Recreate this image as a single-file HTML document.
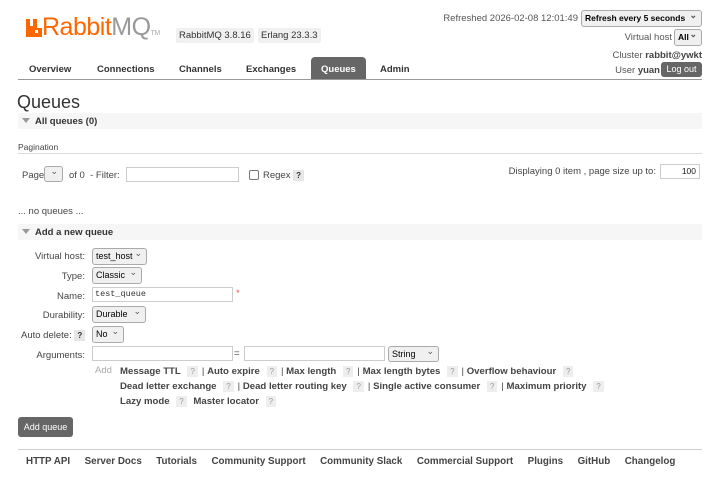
<!DOCTYPE html>
<html><head><meta charset="utf-8"><style>
*{margin:0;padding:0;box-sizing:border-box}
body{width:720px;height:488px;background:#fff;font-family:"Liberation Sans",Arial,sans-serif;font-size:9.5px;color:#444;position:relative;overflow:hidden}
.a{position:absolute;white-space:nowrap}
b{color:#444}
.sel{position:absolute;border:1px solid #aaa;border-radius:3px;background:#f0f0f0;color:#000;font-size:9px;padding:2px 3px;height:17px;overflow:hidden}
.sel:after{content:"⌄";position:absolute;right:4px;top:-1px;font-size:9px;color:#555}
.inp{position:absolute;border:1px solid #ccc;background:#fff;height:15px}
.q{display:inline-block;background:#eee;color:#999;padding:1px 3px;font-size:8px;margin:0 4px}
.qd{display:inline-block;background:#e6e6e6;color:#333;padding:1px 3px;font-size:8px;font-weight:bold}
.bar{position:absolute;left:18px;width:684px;height:16px;background:#f6f6f6}
.bar span{position:absolute;left:17px;top:3px;font-weight:bold;font-size:9.5px;color:#333}
.bar i{position:absolute;left:4px;top:5px;border:4px solid transparent;border-top:5px solid #999;border-bottom:0}
.lbl{position:absolute;right:635px;text-align:right;color:#444}
.nav{position:absolute;top:64px;font-weight:bold;font-size:9.5px;color:#333}
.links{font-size:9.6px}
.links b{font-weight:bold}
.ft span{margin-left:14.5px}
</style></head><body>
<svg class="a" style="left:26px;top:19px" width="16" height="18" viewBox="0 0 16 18"><path d="M0 0h4v7h3V0h4v9h5v9H0z" fill="#f60"/><rect x="9" y="11" width="3" height="3" fill="#fff"/></svg>
<div class="a" style="left:42px;top:13px;font-size:25px;color:#f60;letter-spacing:-0.5px">Rabbit<span style="color:#999">MQ</span><span style="font-size:7px;color:#aaa">TM</span></div>
<div class="a" style="left:176px;top:28px;background:#f0f0f0;padding:2px 3px;font-size:9.5px;color:#333;border-radius:2px">RabbitMQ 3.8.16</div>
<div class="a" style="left:258px;top:28px;background:#f0f0f0;padding:2px 3px;font-size:9.5px;color:#333;border-radius:2px">Erlang 23.3.3</div>
<div class="nav" style="left:29px">Overview</div>
<div class="nav" style="left:97px">Connections</div>
<div class="nav" style="left:179px">Channels</div>
<div class="nav" style="left:246px">Exchanges</div>
<div class="a" style="left:311px;top:57px;width:55px;height:22px;background:#666;border-radius:4px 4px 0 0"></div>
<div class="nav" style="left:321px;color:#fff">Queues</div>
<div class="nav" style="left:380px">Admin</div>
<div class="a" style="left:18px;top:79px;width:684px;height:1px;background:#999"></div>
<div class="a" style="right:142px;top:13px;color:#555">Refreshed 2026-02-08 12:01:49</div>
<div class="sel" style="left:581px;top:10px;width:121px;font-weight:bold;font-size:8.5px">Refresh every 5 seconds</div>
<div class="a" style="right:48px;top:32px;color:#555">Virtual host</div>
<div class="sel" style="left:674px;top:29px;width:28px;font-weight:bold;font-size:8.5px">All</div>
<div class="a" style="right:18px;top:50px;color:#555">Cluster <b>rabbit@ywkt</b></div>
<div class="a" style="right:60px;top:65px;color:#555">User <b>yuan</b></div>
<div class="a" style="left:661px;top:62px;width:41px;height:15px;background:#666;color:#fff;border-radius:3px;text-align:center;line-height:15px;font-size:9px">Log out</div>
<div class="a" style="left:17px;top:92px;font-size:18px;color:#333">Queues</div>
<div class="bar" style="top:113px"><i></i><span>All queues (0)</span></div>
<div class="a" style="left:18px;top:142px;font-size:8.5px">Pagination</div>
<div class="a" style="left:18px;top:153px;width:684px;height:1px;background:#ddd"></div>
<div class="a" style="left:22px;top:170px">Page</div>
<div class="sel" style="left:44px;top:166px;width:19px;height:16px"></div>
<div class="a" style="left:69px;top:170px">of 0 &nbsp;- Filter:</div>
<div class="inp" style="left:126px;top:167px;width:113px"></div>
<div class="a" style="left:249px;top:170px;width:10px;height:10px;border:1px solid #777;border-radius:2px"></div>
<div class="a" style="left:263px;top:170px">Regex <span class="qd">?</span></div>
<div class="a" style="right:64px;top:166px">Displaying 0 item , page size up to:</div>
<div class="inp" style="left:660px;top:164px;width:40px;text-align:right;padding-right:3px;font-size:8.5px;color:#222;line-height:13px">100</div>
<div class="a" style="left:18px;top:206px">... no queues ...</div>
<div class="bar" style="top:224px"><i></i><span>Add a new queue</span></div>
<div class="lbl" style="top:251px">Virtual host:</div>
<div class="sel" style="left:92px;top:248px;width:55px">test_host</div>
<div class="lbl" style="top:271px">Type:</div>
<div class="sel" style="left:92px;top:267px;width:50px">Classic</div>
<div class="lbl" style="top:291px">Name:</div>
<div class="inp" style="left:92px;top:287px;width:141px;font-family:'Liberation Mono',monospace;font-size:8.5px;padding-left:2px;line-height:13px;color:#333">test_queue</div>
<div class="a" style="left:236px;top:288px;color:#e55">*</div>
<div class="lbl" style="top:310px">Durability:</div>
<div class="sel" style="left:92px;top:306px;width:54px">Durable</div>
<div class="a" style="left:21px;top:330px">Auto delete: <span class="qd">?</span></div>
<div class="sel" style="left:92px;top:326px;width:32px">No</div>
<div class="lbl" style="top:350px">Arguments:</div>
<div class="inp" style="left:92px;top:346px;width:141px"></div>
<div class="a" style="left:234px;top:348px">=</div>
<div class="inp" style="left:244px;top:346px;width:141px"></div>
<div class="sel" style="left:388px;top:346px;width:51px;height:16px">String</div>
<div class="a" style="left:95px;top:365px;color:#aaa">Add</div>
<div class="a links" style="left:120px;top:366px"><b>Message TTL</b> <span class="q">?</span>| <b>Auto expire</b> <span class="q">?</span>| <b>Max length</b> <span class="q">?</span>| <b>Max length bytes</b> <span class="q">?</span>| <b>Overflow behaviour</b> <span class="q">?</span></div>
<div class="a links" style="left:120px;top:381px"><b>Dead letter exchange</b> <span class="q">?</span>| <b>Dead letter routing key</b> <span class="q">?</span>| <b>Single active consumer</b> <span class="q">?</span>| <b>Maximum priority</b> <span class="q">?</span></div>
<div class="a links" style="left:120px;top:396px"><b>Lazy mode</b> <span class="q">?</span> <b>Master locator</b> <span class="q">?</span></div>
<div class="a" style="left:18px;top:417px;width:55px;height:20px;background:#666;color:#fff;border-radius:3px;text-align:center;line-height:20px;font-size:9px">Add queue</div>
<div class="a" style="left:18px;top:449px;width:684px;height:1px;background:#ccc"></div>
<div class="a ft" style="left:26px;top:456px;font-weight:bold;color:#444;font-size:9.8px">HTTP API<span>Server Docs</span><span>Tutorials</span><span>Community Support</span><span>Community Slack</span><span>Commercial Support</span><span>Plugins</span><span>GitHub</span><span>Changelog</span></div>
</body></html>
